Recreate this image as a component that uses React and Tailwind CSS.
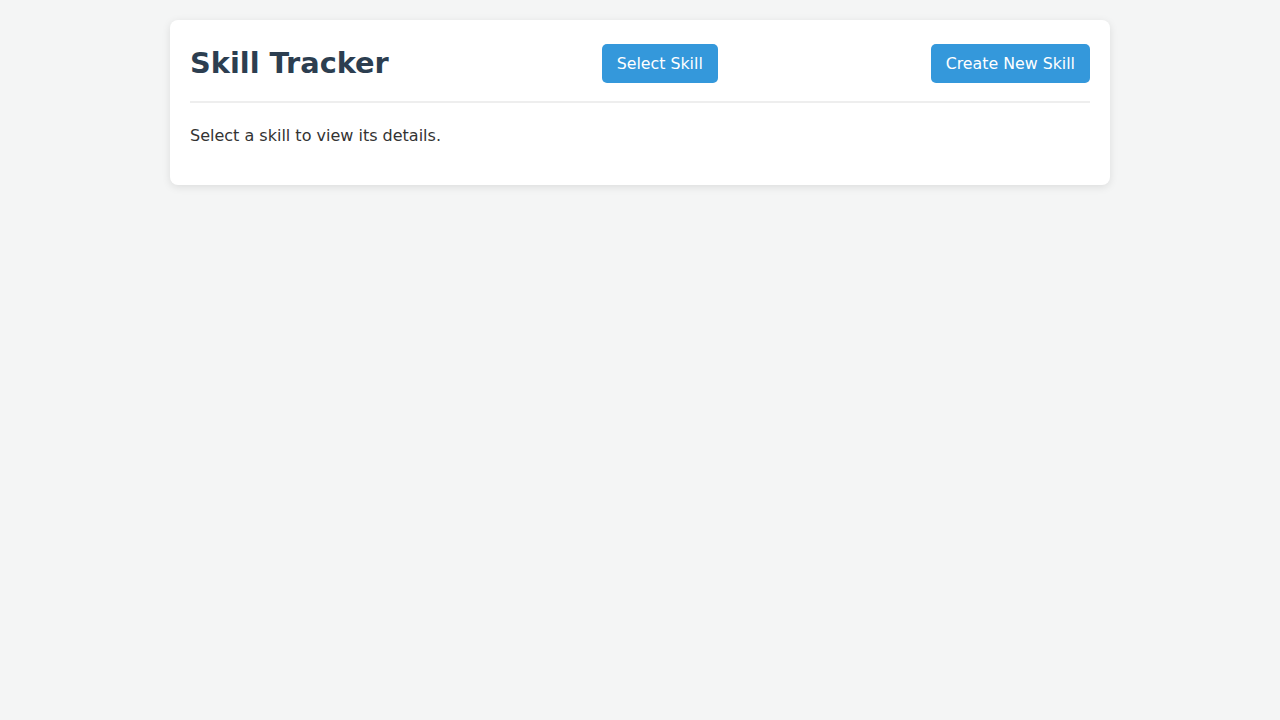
export default function App() {
  return (
    <div
      className="min-h-screen w-full bg-[#f4f5f5] pt-5"
      style={{ fontFamily: '"DejaVu Sans", sans-serif' }}
    >
      <div className="mx-auto w-[940px] rounded-lg bg-white p-5 shadow-[0_2px_8px_rgba(0,0,0,0.1)]">
        <div className="flex h-[63px] items-start justify-between border-b-2 border-[#eeeeee] pb-[14px]">
          <div className="flex h-[47px] items-center">
            <h1 className="text-[28.8px] font-bold leading-none text-[#2c3e50]">Skill Tracker</h1>
          </div>
          <div className="flex h-[47px] items-center">
            <button className="h-[39px] rounded-[5px] bg-[#3498db] px-[15px] pt-px text-[15.8px] text-white">
              Select Skill
            </button>
          </div>
          <div className="flex h-[47px] items-center">
            <button className="h-[39px] rounded-[5px] bg-[#3498db] px-[15px] pt-px text-[15.8px] text-white">
              Create New Skill
            </button>
          </div>
        </div>
        <p className="mt-[21px] mb-[17px] text-base leading-6 text-[#333333]">
          Select a skill to view its details.
        </p>
      </div>
    </div>
  );
}
